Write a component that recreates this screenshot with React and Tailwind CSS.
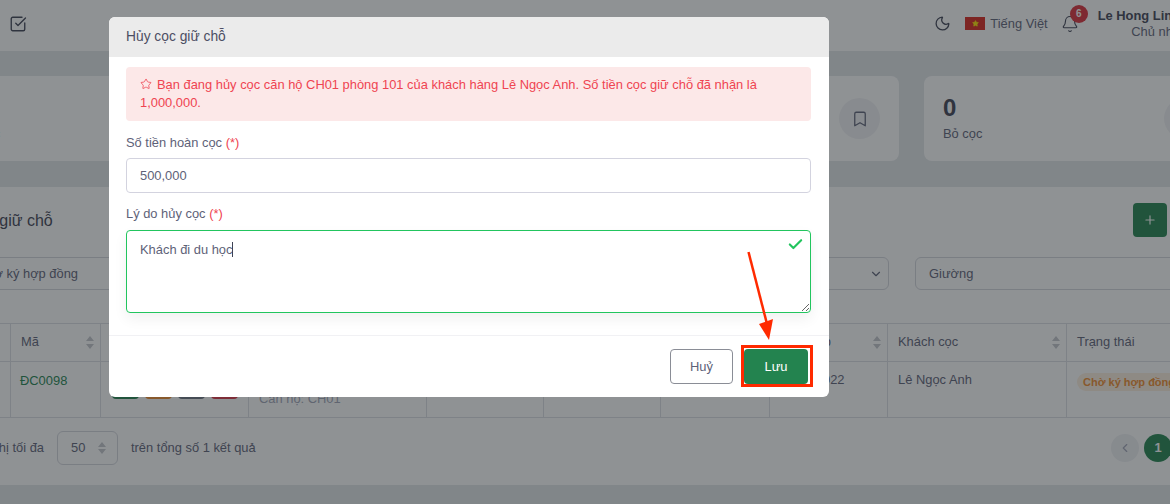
import { Bell, Bookmark, Check, ChevronDown, ChevronLeft, Moon, Plus, SquareCheckBig, Star } from 'lucide-react';

const columns = [
    { label: '' },
    { label: 'Mã', sort: true },
    { label: 'Thao tác' },
    { label: 'Căn hộ', sort: true },
    { label: 'Tòa nhà', sort: true },
    { label: 'Phòng', sort: true },
    { label: 'Giường', sort: true },
    { label: 'Ngày lập', sort: true },
    { label: 'Khách cọc', sort: true },
    { label: 'Trạng thái' },
];

function SortIcon() {
    return (
        <svg width="8" height="13" viewBox="0 0 8 13" className="absolute right-[6px] top-[12px] fill-[#c4c6cc]">
            <path d="M4 0 8 5H0zM4 13 0 8h8z" />
        </svg>
    );
}

function StepperIcon() {
    return (
        <svg width="8" height="12" viewBox="0 0 8 12" className="fill-[#c4c6cc]">
            <path d="M4 0 8 5H0zM4 12 0 7h8z" />
        </svg>
    );
}

function StatCard({ value, label, className, textClass, children }) {
    return (
        <div className={`flex h-[85px] items-center rounded-lg bg-white ${className}`}>
            <div className={textClass}>
                <div className="text-[24px] leading-[28px] font-bold text-[#3f4254]">{value}</div>
                <div className="mt-[3px] text-[12.9px] leading-[18px] text-[#5e6278]">{label}</div>
            </div>
            <div className="ml-auto flex h-[41px] w-[41px] items-center justify-center rounded-full bg-[#f1f1f4] text-[#5e6278]">
                {children}
            </div>
        </div>
    );
}

function Background() {
    return (
        <div className="-ml-[40px] w-[1300px] h-[504px] bg-[#e2e6e9] text-[#5e6278]">
            <header className="flex h-[51px] items-center bg-white pb-[4px] pl-[49px] pr-[80px]">
                <SquareCheckBig size={18} strokeWidth={1.8} className="text-[#3f4254]" />
                <Moon size={17} strokeWidth={1.8} className="ml-auto text-[#3f4254]" />
                <div className="ml-[14px] flex h-[13px] w-[20px] items-center justify-center bg-[#da251d]">
                    <Star size={7} className="fill-[#ffe000] text-[#ffe000]" />
                </div>
                <span className="ml-[5px] text-[12.9px] text-[#5e6278]">Tiếng Việt</span>
                <div className="relative ml-[13px]">
                    <Bell size={18} strokeWidth={1.5} className="text-[#3f4254]" />
                    <span className="absolute -right-[9px] -top-[10px] flex h-[18px] w-[18px] items-center justify-center rounded-full bg-[#dc2f3a] text-[10px] font-bold text-white">
                        6
                    </span>
                </div>
                <div className="ml-[19px] text-right text-[12.9px] leading-[16px]">
                    <div className="font-bold text-[#3f4254]">Le Hong Linh</div>
                    <div className="text-[#5e6278]">Chủ nhà</div>
                </div>
            </header>

            <div className="mt-[25px] flex gap-[25px]">
                <StatCard value="0" label="Đã cọc" className="w-[939px] pr-[19px]" textClass="pl-0">
                    <Bookmark size={18} strokeWidth={1.7} />
                </StatCard>
                <StatCard value="0" label="Bỏ cọc" className="w-[336px] pr-[55px]" textClass="pl-[19px]">
                    <Bookmark size={18} strokeWidth={1.7} />
                </StatCard>
            </div>

            <section className="mt-[26px] h-[298px] bg-white">
                <div className="flex h-[70px] items-center justify-between pb-[2px] pr-[93px]">
                    <h2 className="-ml-[71px] whitespace-nowrap text-[16px] text-[#3f4254]">Danh sách cọc giữ chỗ</h2>
                    <button className="mb-[2px] flex h-[34px] w-[34px] items-center justify-center rounded bg-[#23834f] text-white">
                        <Plus size={14} />
                    </button>
                </div>

                <div className="flex gap-[26px] text-[12.9px]">
                    <div className="flex h-[33px] w-[929px] items-center justify-between rounded-md border border-[#d4d6dd] pl-[17px] pr-[5px]">
                        <span>Chờ ký hợp đồng</span>
                        <ChevronDown size={14} />
                    </div>
                    <div className="flex h-[33px] flex-1 items-center rounded-md border border-[#d4d6dd] pl-[13px]">
                        Giường
                    </div>
                </div>

                <div className="mt-[33px] grid grid-cols-[50px_90px_148px_178px_117px_117px_109px_118px_179px_194px] border-y border-[#dcdee4] text-[12.9px]">
                    {columns.map((col, idx) => (
                        <div key={idx} className="relative h-[37px] border-l border-[#dcdee4] pl-[10px] leading-[36px] first:border-l-0">
                            {col.label}
                            {col.sort && <SortIcon />}
                        </div>
                    ))}
                    <div className="h-[56px] border-t border-[#dcdee4]" />
                    <div className="h-[56px] border-l border-t border-[#dcdee4] pl-[9px] pt-[9px] text-[#23834f]">ĐC0098</div>
                    <div className="flex h-[56px] items-end gap-[6px] border-l border-t border-[#dcdee4] pb-[18px] pl-[11px]">
                        <span className="h-[24px] w-[27px] rounded bg-[#23834f]" />
                        <span className="h-[24px] w-[27px] rounded bg-[#f08c2e]" />
                        <span className="h-[24px] w-[27px] rounded bg-[#6b7280]" />
                        <span className="h-[24px] w-[27px] rounded bg-[#dc3545]" />
                    </div>
                    <div className="h-[56px] border-l border-t border-[#dcdee4] pl-[10px] pt-[27px] text-[#a1a5b7]">Căn hộ: CH01</div>
                    <div className="h-[56px] border-l border-t border-[#dcdee4]" />
                    <div className="h-[56px] border-l border-t border-[#dcdee4]" />
                    <div className="h-[56px] border-l border-t border-[#dcdee4]" />
                    <div className="h-[56px] border-l border-t border-[#dcdee4] pl-[10px] pt-[8px]">20/10/2022</div>
                    <div className="h-[56px] border-l border-t border-[#dcdee4] pl-[10px] pt-[8px]">Lê Ngọc Anh</div>
                    <div className="h-[56px] border-l border-t border-[#dcdee4] pl-[10px] pt-[10px]">
                        <span className="inline-block h-[18px] whitespace-nowrap rounded-full bg-[#fdeede] px-[6px] text-[11px] leading-[18px] font-bold text-[#f08c2e]">
                            Chờ ký hợp đồng
                        </span>
                    </div>
                </div>

                <div className="mt-[13px] flex items-center text-[12.9px]">
                    <span className="w-[84px] whitespace-nowrap text-right">Hiển thị tối đa</span>
                    <div className="ml-[13px] flex h-[34px] w-[61px] items-center justify-between rounded-md border border-[#d4d6dd] pl-[13px] pr-[11px]">
                        50
                        <StepperIcon />
                    </div>
                    <span className="ml-[13px] w-[124px] whitespace-nowrap">trên tổng số 1 kết quả</span>
                    <div className="ml-[856px] flex h-[28px] w-[28px] items-center justify-center rounded-full bg-[#eff0f3] text-[#a1a5b7]">
                        <ChevronLeft size={14} />
                    </div>
                    <div className="ml-[5px] flex h-[28px] w-[28px] items-center justify-center rounded-full bg-[#23834f] font-bold text-white">1</div>
                </div>
            </section>
        </div>
    );
}

function CancelDepositModal() {
    return (
        <div className="absolute left-[109px] top-[17px] w-[720px] overflow-hidden rounded-md bg-white text-[12.9px] text-[#5e6278]">
            <div className="flex h-[40px] items-center bg-[#ebebeb] px-[17px] pt-[1px] text-[13.8px] text-[#4b4e63]">Hủy cọc giữ chỗ</div>
            <div className="px-[17px] pt-[10px]">
                <div className="w-[685px] rounded bg-[#fce8e8] px-[14px] py-[9px] leading-[18px] text-[#ef4451]">
                    <Star size={12} strokeWidth={1.6} className="mr-[5px] inline-block align-[-1px]" />
                    Bạn đang hủy cọc căn hộ CH01 phòng 101 của khách hàng Lê Ngọc Anh. Số tiền cọc giữ chỗ đã nhận là 1,000,000.
                </div>
                <label className="mt-[13px] block leading-[18px]">
                    Số tiền hoàn cọc <span className="text-[#ef4451]">(*)</span>
                </label>
                <div className="mt-[6px] flex h-[35px] w-[685px] items-center rounded border border-[#d3d3df] px-[13px]">500,000</div>
                <label className="mt-[12px] block leading-[18px]">
                    Lý do hủy cọc <span className="text-[#ef4451]">(*)</span>
                </label>
                <div className="relative mt-[7px] h-[83px] w-[685px] resize-y overflow-auto rounded border border-[#22c55e] px-[13px] pt-[10px] leading-[18px] shadow-[0_6px_14px_rgba(0,0,0,0.06)]">
                    Khách đi du học
                    <span className="inline-block h-[15px] w-px bg-[#3f4254] align-[-3px]" />
                    <Check size={17} strokeWidth={3} className="absolute right-[6px] top-[5px] text-[#22c55e]" />
                </div>
            </div>
            <div className="mt-[22px] flex h-[62px] items-start justify-end gap-[11px] border-t border-[#f1f1f4] pr-[21px] pt-[13px]">
                <button className="h-[35px] w-[63px] rounded border border-[#8a8d96] bg-white text-[#5e6278]">Huỷ</button>
                <button className="h-[35px] w-[64px] rounded bg-[#23834f] font-medium text-white">Lưu</button>
            </div>
        </div>
    );
}

export default function App() {
    return (
        <div className="relative h-[504px] w-[1170px] overflow-hidden font-['Liberation_Sans',sans-serif]">
            <Background />
            <div className="absolute inset-0 bg-[#1f2529]/50" />
            <CancelDepositModal />
            {/* annotation drawn over the screenshot */}
            <div className="absolute left-[741px] top-[345px] h-[42px] w-[72px] border-[3px] border-[#ff2a00]" />
            <svg width="40" height="100" viewBox="0 0 40 100" className="absolute left-[740px] top-[248px]">
                <path d="M8.5 4 27 76" stroke="#ff2a00" strokeWidth="2.5" fill="none" />
                <path d="M29 92 19 76 33 71z" fill="#ff2a00" />
            </svg>
        </div>
    );
}
